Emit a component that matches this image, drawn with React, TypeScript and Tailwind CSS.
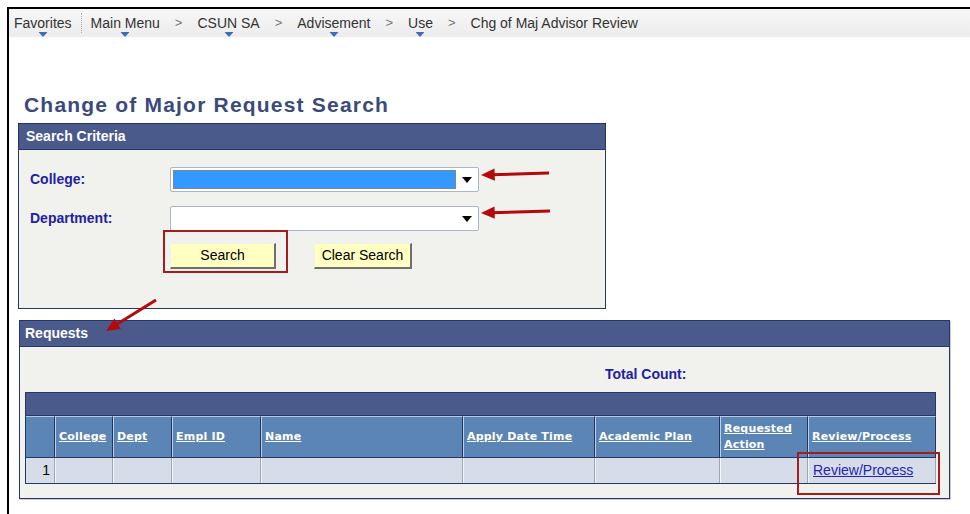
import React from "react";

const navItems = [
  { label: "Main Menu", menu: true },
  { label: "CSUN SA", menu: true },
  { label: "Advisement", menu: true },
  { label: "Use", menu: true },
  { label: "Chg of Maj Advisor Review", menu: false },
];

const columns = [
  { key: "num", label: "", w: 29 },
  { key: "college", label: "College", w: 58 },
  { key: "dept", label: "Dept", w: 59 },
  { key: "emplid", label: "Empl ID", w: 89 },
  { key: "name", label: "Name", w: 202 },
  { key: "apply", label: "Apply Date Time", w: 132 },
  { key: "plan", label: "Academic Plan", w: 125 },
  { key: "action", label: "Requested Action", w: 88 },
  { key: "review", label: "Review/Process", w: 128 },
];

function MenuCaret() {
  return (
    <svg width="9" height="5" viewBox="0 0 9 5" className="absolute left-1/2 -translate-x-1/2 top-[19px]">
      <path d="M0 0 H9 L4.5 5 Z" fill="#3e6db3" />
    </svg>
  );
}

function SelectBox({ highlighted }: { highlighted?: boolean }) {
  return (
    <div className="w-[309px] h-[25px] bg-white border border-[#a9b6c9] rounded-[2px] flex items-center pl-[2px] pr-[6px]">
      <div className="flex-1 h-[19px]">
        {highlighted && <div className="w-[283px] h-full bg-[#3399ff] border border-dotted border-[#c8742a]" />}
      </div>
      <svg width="10" height="6" viewBox="0 0 10 6">
        <path d="M0 0 H10 L5 6 Z" fill="#000" />
      </svg>
    </div>
  );
}

function YellowButton({ children, w }: { children: React.ReactNode; w: string }) {
  return (
    <button
      className={`${w} h-[26px] bg-[#ffffc2] text-[14px] text-black border border-t-[#f0f0f0] border-l-[#f0f0f0] border-r-2 border-b-2 border-r-[#6f6f6f] border-b-[#6f6f6f] flex items-center justify-center`}
    >
      {children}
    </button>
  );
}

function Arrow({ x1, y1, x2, y2 }: { x1: number; y1: number; x2: number; y2: number }) {
  const ang = Math.atan2(y2 - y1, x2 - x1);
  const len = 15;
  const spread = 0.42;
  const ax = x2 - len * Math.cos(ang - spread);
  const ay = y2 - len * Math.sin(ang - spread);
  const bx = x2 - len * Math.cos(ang + spread);
  const by = y2 - len * Math.sin(ang + spread);
  const sx = x2 - 10 * Math.cos(ang);
  const sy = y2 - 10 * Math.sin(ang);
  return (
    <g>
      <line x1={x1} y1={y1} x2={sx} y2={sy} stroke="#b3080c" strokeWidth="3" />
      <path d={`M${x2} ${y2} L${ax} ${ay} L${bx} ${by} Z`} fill="#b3080c" />
    </g>
  );
}

export default function App() {
  return (
    <div className="relative w-[970px] h-[514px] bg-white overflow-hidden" style={{ fontFamily: '"Liberation Sans", Arial, sans-serif' }}>
      <div className="ml-[7px] mt-[7px] h-[507px] border-l-2 border-t-2 border-black">
        {/* breadcrumb bar */}
        <div className="h-[28px] bg-gradient-to-b from-[#f7f7f7] to-[#ececec] flex items-center text-[14px] text-[#333] pl-[5px]">
          <span className="relative">
            Favorites
            <MenuCaret />
          </span>
          <span className="mx-[9px] h-[20px] border-l border-dotted border-[#aaa]" />
          {navItems.map((item, i) => (
            <React.Fragment key={item.label}>
              {i > 0 && <span className="px-[15px] text-[#777] text-[13px]">&gt;</span>}
              <span className="relative">
                {item.label}
                {item.menu && <MenuCaret />}
              </span>
            </React.Fragment>
          ))}
        </div>

        <h1 className="mt-[56px] ml-[15px] text-[21px] leading-[24px] font-bold text-[#3b4a7b] tracking-[1.2px]">
          Change of Major Request Search
        </h1>

        {/* search criteria panel */}
        <div className="mt-[6px] ml-[9px] w-[588px] border border-[#26366b] bg-[#f1f2ee]">
          <div className="h-[26px] bg-[#4a5a8b] border-b border-[#26366b] px-[7px] flex items-center text-white font-bold text-[14px]">
            Search Criteria
          </div>
          <div className="h-[158px] pt-[17px] pl-[11px]">
            <div className="flex items-center">
              <span className="w-[140px] text-[14px] font-bold text-[#2121a1]">College:</span>
              <SelectBox highlighted />
            </div>
            <div className="flex items-center mt-[14px]">
              <span className="w-[140px] text-[14px] font-bold text-[#2121a1]">Department:</span>
              <SelectBox />
            </div>
            <div className="flex mt-[12px] ml-[140px] gap-[38px]">
              <YellowButton w="w-[106px]">Search</YellowButton>
              <YellowButton w="w-[98px]">Clear Search</YellowButton>
            </div>
          </div>
        </div>

        {/* requests panel */}
        <div className="mt-[11px] ml-[10px] w-[931px] border border-[#26366b] bg-[#f1f2ee] shadow-[1px_1px_0_#c9cdd8]">
          <div className="h-[26px] bg-[#4a5a8b] border-b border-[#26366b] px-[5px] flex items-center text-white font-bold text-[14px]">
            Requests
          </div>
          <div className="px-[5px] pb-[14px]">
            <div className="h-[45px] flex items-center pl-[580px] pt-[10px] text-[14px] font-bold text-[#2121a1]">
              Total Count:
            </div>
            <div className="w-[911px] border border-[#26366b]">
              <div className="h-[23px] bg-[#4a5a8b] border-b border-[#26366b]" />
              <div className="flex h-[41px] bg-[#5b85b4]">
                {columns.map((c, i) => (
                  <div
                    key={c.key}
                    style={{ width: c.w }}
                    className={`shrink-0 h-full flex items-center pl-[3px] border-t border-t-[#b9cbe0] ${i > 0 ? "border-l border-l-[#bcd0e6]" : ""} border-r border-r-[#24345f] text-[11px] leading-[16px] font-bold text-white underline`}
                  >
                    <span style={{ fontFamily: '"DejaVu Sans", Verdana, sans-serif' }} className="tracking-[0.2px]">
                      {c.label === "Requested Action" ? (
                        <>
                          Requested
                          <br />
                          Action
                        </>
                      ) : (
                        c.label
                      )}
                    </span>
                  </div>
                ))}
              </div>
              <div className="flex h-[26px] bg-[#d6dce8] border-t border-[#26366b]">
                {columns.map((c, i) => (
                  <div
                    key={c.key}
                    style={{ width: c.w }}
                    className={`shrink-0 h-full flex items-center ${i > 0 ? "border-l border-l-[#f6f7fa]" : ""} border-r border-r-[#9ea5b3] text-[14px]`}
                  >
                    {c.key === "num" && <span className="w-full text-right pr-[4px] text-black">1</span>}
                    {c.key === "review" && (
                      <a href="#" className="pl-[4px] text-[#2424b8] underline">
                        Review/Process
                      </a>
                    )}
                  </div>
                ))}
              </div>
            </div>
          </div>
        </div>
      </div>

      {/* callout annotations */}
      <div className="absolute left-[163px] top-[230px] w-[125px] h-[43px] border-2 border-[#a51c1f]" />
      <div className="absolute left-[797px] top-[452px] w-[143px] h-[43px] border-2 border-[#a51c1f]" />
      <svg className="absolute left-0 top-0 pointer-events-none" width="970" height="514">
        <Arrow x1={549} y1={173} x2={481} y2={175} />
        <Arrow x1={550} y1={211} x2={481} y2={213} />
        <Arrow x1={156} y1={300} x2={106} y2={331} />
      </svg>
    </div>
  );
}
